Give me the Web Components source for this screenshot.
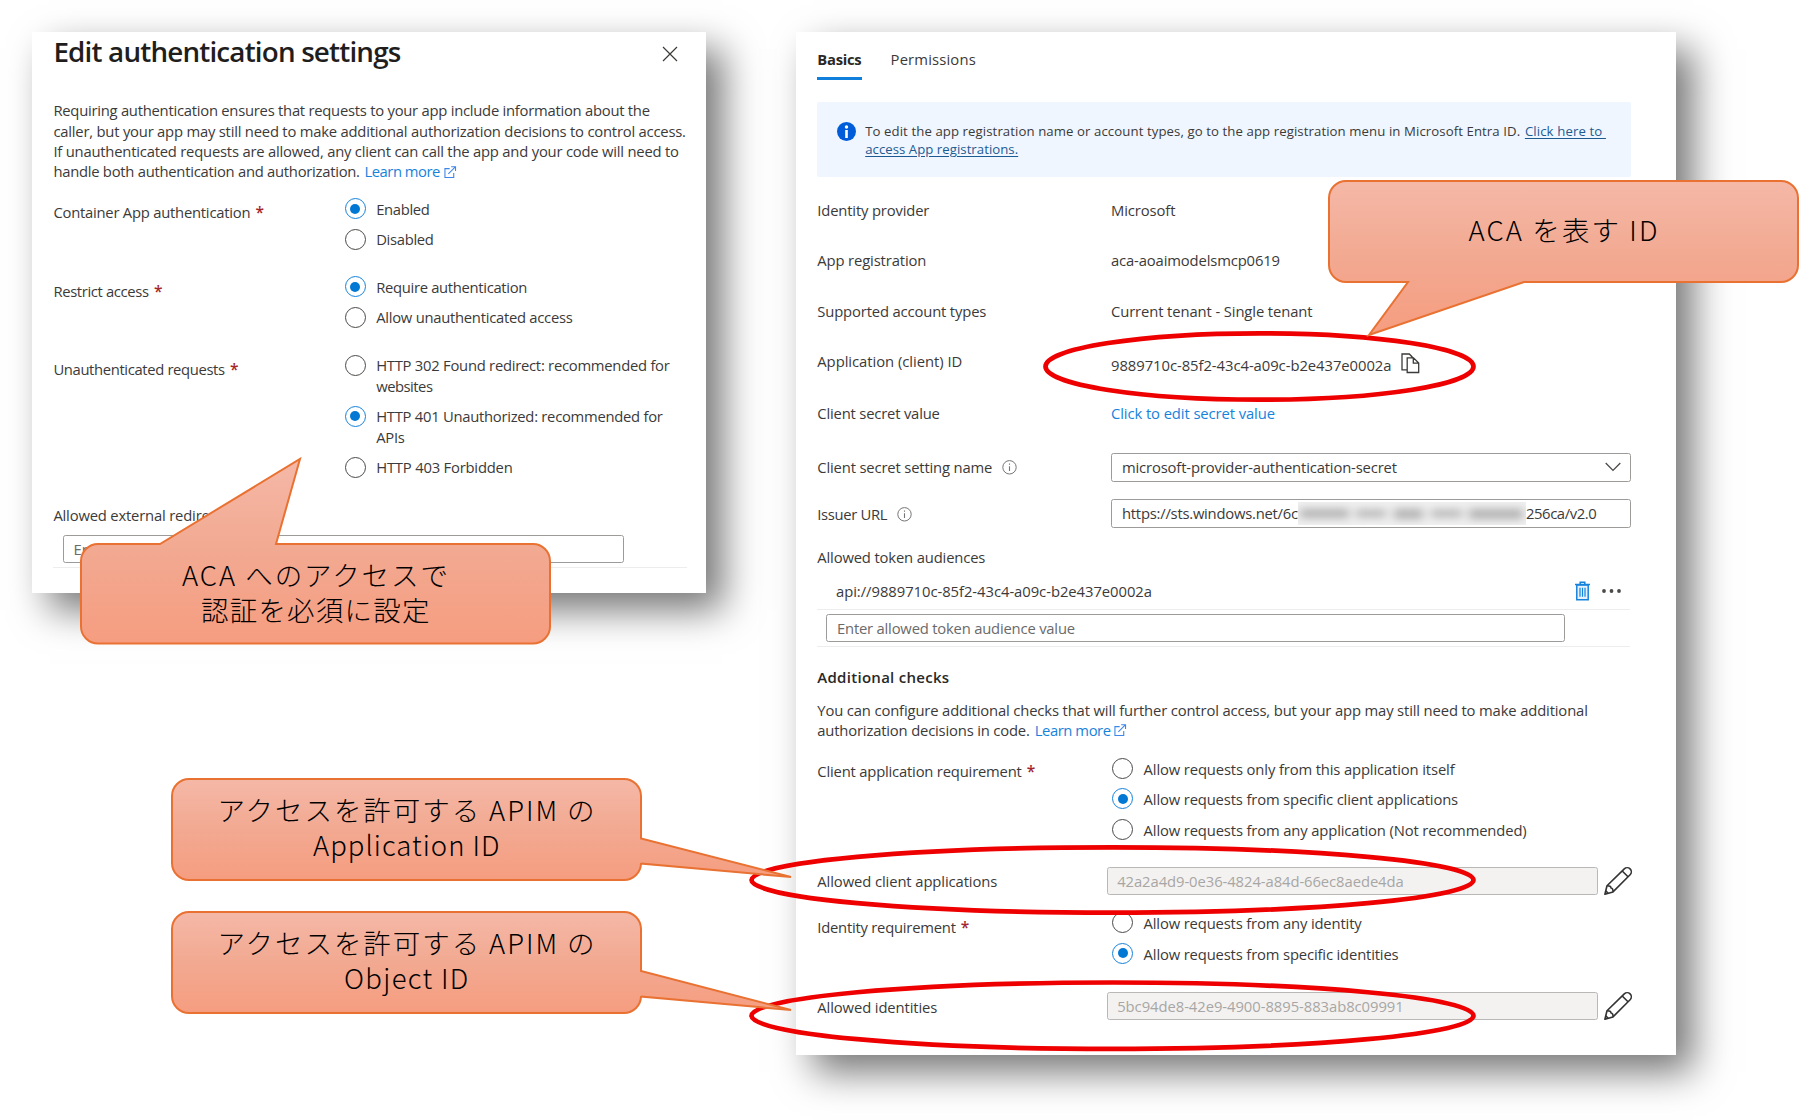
<!DOCTYPE html>
<html lang="ja">
<head>
<meta charset="utf-8">
<title>Authentication settings</title>
<style>
html,body{margin:0;padding:0}
body{width:1799px;height:1120px;overflow:hidden;background:#fff;position:relative;font-family:"Open Sans","Noto Sans",sans-serif;font-size:14.8px;line-height:20px;color:#3b3a39}
.stage{display:flex;align-items:flex-start;gap:90px;padding:32px 0 0 32px}
.link{color:#1583dc}
.para{display:flex;flex-direction:column;line-height:20.4px}
.para>div{display:flex;align-items:center;height:20.4px}
.ph{color:#6a6a6a}
</style>
</head>
<body>
<div class="stage">
  <az-panel style="--w:674px;--h:561px;--pl:21.4px;--tt:.4px">
    <panel-title style="height:68.3px"><fit-text w="347.5">Edit authentication settings</fit-text></panel-title>
    <div class="para" style="height:82.7px">
      <div><fit-text w="596.5">Requiring authentication ensures that requests to your app include information about the</fit-text></div>
      <div><fit-text w="632.5">caller, but your app may still need to make additional authorization decisions to control access.</fit-text></div>
      <div><fit-text w="625.5">If unauthenticated requests are allowed, any client can call the app and your code will need to</fit-text></div>
      <div><fit-text w="306.5">handle both authentication and authorization.</fit-text><fit-text class="link" w="75.5" style="margin-left:4.7px">Learn more</fit-text><az-icon name="ext" style="margin-left:4.3px"></az-icon></div>
    </div>
    <form-row style="--c:291.5px;--h:80px;--lt:19.2px;--vt:15.5px">
      <fit-text slot="label" w="197">Container App authentication</fit-text><req-mark slot="label"></req-mark>
      <radio-item checked><fit-text w="53.5">Enabled</fit-text></radio-item>
      <radio-item><fit-text w="57.5">Disabled</fit-text></radio-item>
    </form-row>
    <form-row style="--c:291.5px;--h:77px;--lt:17.8px;--vt:13.5px">
      <fit-text slot="label" w="95.5">Restrict access</fit-text><req-mark slot="label"></req-mark>
      <radio-item checked><fit-text w="151">Require authentication</fit-text></radio-item>
      <radio-item><fit-text w="196.5">Allow unauthenticated access</fit-text></radio-item>
    </form-row>
    <form-row style="--c:291.5px;--h:160px;--lt:18.8px;--vt:14.8px">
      <fit-text slot="label" w="171.5">Unauthenticated requests</fit-text><req-mark slot="label"></req-mark>
      <radio-item style="--rh:51px"><fit-text w="293.5">HTTP 302 Found redirect: recommended for</fit-text><fit-text w="56.5">websites</fit-text></radio-item>
      <radio-item checked style="--rh:51px"><fit-text w="286.5">HTTP 401 Unauthorized: recommended for</fit-text><fit-text w="28.5">APIs</fit-text></radio-item>
      <radio-item><fit-text w="136.5">HTTP 403 Forbidden</fit-text></radio-item>
    </form-row>
    <form-row style="--h:35px;--lt:4.8px;--c:400px"><fit-text slot="label" w="206">Allowed external redirect URLs</fit-text></form-row>
    <text-box class="ph" style="--w:560.5px;--bh:28px;--p:9.5px;margin-left:9.7px"><fit-text w="238">Enter allowed external redirect URL</fit-text></text-box>
    <hr-line style="width:634px;margin-top:4px"></hr-line>
  </az-panel>

  <az-panel style="--w:880px;--h:1023px;--pl:21.3px">
    <tab-bar>
      <tab-item active><fit-text w="44.3">Basics</fit-text></tab-item>
      <tab-item><fit-text w="85.2">Permissions</fit-text></tab-item>
    </tab-bar>
    <info-banner>
      <div><fit-text w="655">To edit the app registration name or account types, go to the app registration menu in Microsoft Entra ID.</fit-text><fit-text u w="81" style="margin-left:4.7px">Click here to&nbsp;</fit-text></div>
      <div><fit-text u w="153">access App registrations.</fit-text></div>
    </info-banner>
    <form-row style="--h:50.3px;--lt:22.8px;--vt:22.8px"><fit-text slot="label" w="112">Identity provider</fit-text><fit-text w="64.5">Microsoft</fit-text></form-row>
    <form-row style="--h:50.7px;--lt:22.9px;--vt:22.9px"><fit-text slot="label" w="109">App registration</fit-text><fit-text w="169">aca-aoaimodelsmcp0619</fit-text></form-row>
    <form-row style="--h:50.7px;--lt:23.1px;--vt:23.1px"><fit-text slot="label" w="169">Supported account types</fit-text><fit-text w="201.5">Current tenant - Single tenant</fit-text></form-row>
    <form-row line style="--h:51.3px;--lt:22.8px;--vt:24.6px"><fit-text slot="label" w="145">Application (client) ID</fit-text><fit-text w="280.5">9889710c-85f2-43c4-a09c-b2e437e0002a</fit-text><az-icon name="copy" style="margin-left:10px"></az-icon></form-row>
    <form-row style="--h:73px;--lt:23.3px;--vt:23.3px"><fit-text slot="label" w="122.5">Client secret value</fit-text><fit-text class="link" w="164">Click to edit secret value</fit-text></form-row>
    <form-row style="--h:46px;--lt:4.1px"><fit-text slot="label" w="175">Client secret setting name</fit-text><az-icon slot="label" name="info" style="margin-left:10px"></az-icon>
      <text-box style="--w:520px;--p:10px"><fit-text w="275">microsoft-provider-authentication-secret</fit-text><az-icon name="chev" style="margin-left:auto;margin-right:9px"></az-icon></text-box></form-row>
    <form-row style="--h:48.3px;--lt:5.3px"><fit-text slot="label" w="70">Issuer URL</fit-text><az-icon slot="label" name="info" style="margin-left:10px"></az-icon>
      <text-box style="--w:520px;--p:10px"><fit-text w="176">https://sts.windows.net/6c</fit-text><blur-patch></blur-patch><fit-text w="70.5">256ca/v2.0</fit-text></text-box></form-row>
    <form-row style="--h:33.7px"><fit-text slot="label" w="168">Allowed token audiences</fit-text></form-row>
    <audience-row><fit-text w="316">api://9889710c-85f2-43c4-a09c-b2e437e0002a</fit-text><az-icon name="trash" style="margin-left:auto"></az-icon><az-icon name="dots" style="margin:0 9.5px 0 12px"></az-icon></audience-row>
    <hr-line style="width:813px"></hr-line>
    <text-box class="ph" style="--w:739.5px;--p:10px;margin:4px 0 3.3px 8.7px"><fit-text w="238">Enter allowed token audience value</fit-text></text-box>
    <hr-line style="width:813px"></hr-line>
    <form-row style="--h:53.4px;--lt:20.8px;font-weight:600;color:#292827;font-size:15px"><fit-text slot="label" w="132">Additional checks</fit-text></form-row>
    <div class="para" style="height:41px">
      <div><fit-text w="770.5">You can configure additional checks that will further control access, but your app may still need to make additional</fit-text></div>
      <div><fit-text w="212.5">authorization decisions in code.</fit-text><fit-text class="link" w="76" style="margin-left:5px">Learn more</fit-text><az-icon name="ext" style="margin-left:3.5px"></az-icon></div>
    </div>
    <form-row style="--c:295px;--h:125.6px;--lt:20.2px;--vt:16.7px;--tt:.9px">
      <fit-text slot="label" w="204.5">Client application requirement</fit-text><req-mark slot="label"></req-mark>
      <radio-item style="--rh:30.5px"><fit-text w="311">Allow requests only from this application itself</fit-text></radio-item>
      <radio-item checked style="--rh:30.5px"><fit-text w="314.5">Allow requests from specific client applications</fit-text></radio-item>
      <radio-item><fit-text w="383">Allow requests from any application (Not recommended)</fit-text></radio-item>
    </form-row>
    <form-row line style="--c:289.4px;--h:28px;--lt:4.4px"><fit-text slot="label" w="180">Allowed client applications</fit-text>
      <text-box disabled style="--w:491px;--bh:28px;--p:9.5px"><fit-text w="286.5">42a2a4d9-0e36-4824-a84d-66ec8aede4da</fit-text></text-box><az-icon name="pencil" style="margin-left:6px"></az-icon></form-row>
    <form-row style="--c:295px;--h:97px;--lt:22.2px;--vt:17.9px;--tt:.7px">
      <fit-text slot="label" w="138.5">Identity requirement</fit-text><req-mark slot="label"></req-mark>
      <radio-item style="--rh:30.5px"><fit-text w="218">Allow requests from any identity</fit-text></radio-item>
      <radio-item checked><fit-text w="255">Allow requests from specific identities</fit-text></radio-item>
    </form-row>
    <form-row line style="--c:289.4px;--h:28px;--lt:5.3px"><fit-text slot="label" w="120">Allowed identities</fit-text>
      <text-box disabled style="--w:491px;--bh:28px;--p:9.5px"><fit-text w="286.5">5bc94de8-42e9-4900-8895-883ab8c09991</fit-text></text-box><az-icon name="pencil" style="margin-left:6px"></az-icon></form-row>
  </az-panel>
</div>

<red-ring cx="1259.5" cy="366.5" rx="214" ry="33.2"></red-ring>
<red-ring cx="1112.5" cy="880" rx="361" ry="32.7"></red-ring>
<red-ring cx="1112.5" cy="1015.7" rx="361" ry="33.2"></red-ring>
<note-callout box="81,544,550,643.5" side="top" base="160,276" tip="300,459" pad="13"><fit-text w="267">ACA へのアクセスで</fit-text><fit-text w="229">認証を必須に設定</fit-text></note-callout>
<note-callout box="1329,181,1798,282" side="bottom" base="1408,1524" tip="1369,335" pad="30.5"><fit-text w="190">ACA を表す ID</fit-text></note-callout>
<note-callout box="172,779,641,880" side="right" base="838.5,863.5" tip="791,877" pad="12.5"><fit-text w="378">アクセスを許可する APIM の</fit-text><fit-text w="187">Application ID</fit-text></note-callout>
<note-callout box="172,912,641,1013" side="right" base="971,996.5" tip="791,1010" pad="13"><fit-text w="378">アクセスを許可する APIM の</fit-text><fit-text w="125">Object ID</fit-text></note-callout>

<script>
const define=(name,html,init)=>customElements.define(name,class extends HTMLElement{
  connectedCallback(){
    if(this.shadowRoot)return;
    this.attachShadow({mode:'open'}).innerHTML=typeof html==='function'?html(this):html;
    if(init)init(this,this.shadowRoot);
  }
});

/* Panels and rows */
define('az-panel','<style>:host{display:flex;flex-direction:column;box-sizing:border-box;flex:none;width:var(--w);height:var(--h);padding-left:var(--pl);background:#fff;box-shadow:17px 17px 36px rgba(0,0,0,.54)}</style><slot></slot>');
define('panel-title','<style>:host{display:flex;justify-content:space-between;align-items:flex-start;box-sizing:border-box;padding:.5px 28px 0 0;font-size:27.8px;line-height:36px;font-weight:600;color:#1f1e1d}svg{margin-top:13.2px}</style><slot></slot><svg width="16" height="16" viewBox="0 0 16 16" stroke="#3b3a39" stroke-width="1.2"><path d="M1 1l14 14M15 1L1 15"/></svg>');
define('form-row','<style>:host{display:grid;grid-template-columns:var(--c,293.7px) 1fr;height:var(--h);flex:none}.l{display:flex;align-items:flex-start;padding-top:var(--lt,0)}.v{display:flex;flex-direction:column;padding-top:var(--vt,0)}:host([line]) .v{flex-direction:row;align-items:flex-start}:host([line]) ::slotted(fit-text){margin-top:2px}:host([line]) .l ::slotted(fit-text){margin-top:0}</style><div class="l"><slot name="label"></slot></div><div class="v"><slot></slot></div>');
define('req-mark','<style>:host{display:block;margin-left:5px;color:#a4262c;font-size:15.5px;line-height:20px;font-weight:600}</style>*');
define('hr-line','<style>:host{display:block;height:1px;flex:none;background:#eeeded}</style>');
define('radio-item','<style>:host{display:flex;gap:10.3px;height:var(--rh,30.3px);flex:none}i{box-sizing:border-box;width:21px;height:21px;flex:none;border:1.3px solid #4b4a48;border-radius:50%;display:flex;align-items:center;justify-content:center}:host([checked]) i{border-color:#1583dc}:host([checked]) i::after{content:"";width:10px;height:10px;border-radius:50%;background:#0078d4}div{display:flex;flex-direction:column;line-height:20.4px;padding-top:var(--tt,1.3px)}</style><i></i><div><slot></slot></div>');
define('text-box','<style>:host{display:flex;align-items:center;box-sizing:border-box;flex:none;width:var(--w);height:var(--bh,28.7px);padding-left:var(--p);border:1.3px solid #9d9b99;border-radius:2.5px;background:#fff}:host([disabled]){background:#f3f2f1;border-color:#bab8b7;color:#a8a6a4}</style><slot></slot>');
define('tab-bar','<style>:host{display:flex;gap:29px;height:69.7px;flex:none}</style><slot></slot>');
define('tab-item','<style>:host{display:block;box-sizing:border-box;height:47.7px;padding-top:16.7px;border-bottom:3px solid transparent}:host([active]){border-color:#0f7fdb;font-weight:700;color:#292827}</style><slot></slot>');
define('info-banner','<style>:host{display:flex;gap:9.5px;box-sizing:border-box;flex:none;width:813.4px;height:75.3px;padding:20.3px 0 0 19.4px;background:#f0f6ff;border-radius:2px;font-size:13.2px;line-height:17.7px}.t{padding-top:1.5px}::slotted(div){display:flex}</style><svg width="19" height="19" viewBox="0 0 19 19"><circle cx="9.5" cy="9.5" r="9.5" fill="#015cda"/><circle cx="9.5" cy="5" r="1.7" fill="#fff"/><path d="M9.5 8v8" stroke="#fff" stroke-width="2.6"/></svg><div class="t"><slot></slot></div>');
define('audience-row','<style>:host{display:flex;align-items:center;box-sizing:border-box;width:813.4px;height:27.7px;flex:none;padding:0 0 8.3px 18.7px}</style><slot></slot>');
define('blur-patch','<style>:host{display:flex;align-items:center;width:228px;height:23px;overflow:hidden;background:#f0f0f0}svg{flex:none}</style><svg width="228" height="23"><filter id="b" x="-20%" y="-100%" width="140%" height="300%"><feGaussianBlur stdDeviation="5 4.2"/></filter><g filter="url(#b)" fill="#b0b0b0"><rect x="2" y="7" width="49" height="9"/><rect x="58" y="8" width="30" height="7"/><rect x="96" y="7" width="29" height="10"/><rect x="133" y="8" width="31" height="7"/><rect x="171" y="7" width="54" height="10"/></g></svg>');

/* Icons */
const ICONS={
  ext:[12.3,12.3,'<path d="M6 2.8H1v9.3h9.3V7.3M4.6 8.4L12 1M7.6 .8h4.6v4.6" fill="none" stroke="#3d87e8" stroke-width="1.15"/>','0 0 13 13'],
  copy:[19,21,'<path d="M6 16.8H1V1h7.3l3 3M8.3 1l3.6 3.8M6.2 4.8h6.3l5.2 5.2v9.5H6.2zM12.3 4.8v5.4h5.4" fill="none" stroke="#3b3a39" stroke-width="1.3"/>'],
  info:[15,20,'<circle cx="7.5" cy="10.3" r="6.7" fill="none" stroke="#777573" stroke-width="1"/><path d="M7.5 9.3v4.6M7.5 6.5v1.3" stroke="#777573" stroke-width="1.1"/>'],
  chev:[16,10,'<path d="M.7 1l7.3 7.4L15.3 1" fill="none" stroke="#4b4a48" stroke-width="1.3"/>'],
  trash:[15,20,'<path d="M1.8 4h11.4v14.7H1.8z" fill="#e6f2fc" stroke="#1583dc" stroke-width="1.5"/><path d="M0 3.6h15M5.2 3V1.2h4.6V3" fill="none" stroke="#1583dc" stroke-width="1.5"/><path d="M5 6.8v9M7.5 6.8v9M10 6.8v9" stroke="#1583dc" stroke-width="1.2"/>'],
  dots:[19,6,'<g fill="#4b4a48"><circle cx="2" cy="3" r="1.9"/><circle cx="9.5" cy="3" r="1.9"/><circle cx="17" cy="3" r="1.9"/></g>'],
  pencil:[28,28,'<g fill="none" stroke="#333" stroke-width="1.6" stroke-linejoin="round"><path d="M.9 27.2L3 18.8 20.3 1.9a4.1 4.1 0 0 1 5.8 5.8L9 24.9z"/><path d="M18.2 4l5.8 5.8M3 18.8c2.6-.1 4 .6 4 2.2 1.4.1 2.2 1.5 2 3.9M1.8 23.9l2.4 2.4"/></g>']
};
define('az-icon',el=>{const [w,h,p,vb]=ICONS[el.getAttribute('name')];return `<style>:host{display:block;flex:none}svg{display:block;overflow:visible}</style><svg width="${w}" height="${h}" viewBox="${vb||`0 0 ${w} ${h}`}">${p}</svg>`});

/* Annotations drawn over the panels */
define('red-ring',el=>{
  const [cx,cy,rx,ry]=['cx','cy','rx','ry'].map(a=>+el.getAttribute(a));
  return `<style>:host{position:absolute;left:0;top:0;pointer-events:none}svg{display:block}</style><svg width="1799" height="1120"><ellipse cx="${cx}" cy="${cy}" rx="${rx}" ry="${ry}" fill="none" stroke="#ee0000" stroke-width="4.7"/></svg>`;
});
define('note-callout',el=>{
  const n=a=>el.getAttribute(a).split(',').map(Number);
  const [l,t,r,b]=n('box'),[p,q]=n('base'),[x,y]=n('tip'),side=el.getAttribute('side'),R=17;
  const top=side==='top'?`L${p} ${t}L${x} ${y}L${q} ${t}`:'';
  const right=side==='right'?`L${r} ${p}L${x} ${y}L${r} ${q}`:'';
  const bottom=side==='bottom'?`L${q} ${b}L${x} ${y}L${p} ${b}`:'';
  const d=`M${l+R} ${t}${top}L${r-R} ${t}A${R} ${R} 0 0 1 ${r} ${t+R}${right}L${r} ${b-R}A${R} ${R} 0 0 1 ${r-R} ${b}${bottom}L${l+R} ${b}A${R} ${R} 0 0 1 ${l} ${b-R}L${l} ${t+R}A${R} ${R} 0 0 1 ${l+R} ${t}Z`;
  return `<style>:host{position:absolute;left:${l}px;top:${t}px;width:${r-l}px;height:${b-t}px;box-sizing:border-box;padding-top:${el.getAttribute('pad')}px;display:flex;flex-direction:column;align-items:center;font:300 27.5px/35px "Noto Sans CJK JP",sans-serif;color:#000}svg{position:absolute;left:${-l}px;top:${-t}px}::slotted(fit-text){position:relative}</style><svg width="1799" height="1120"><defs><linearGradient id="g" x1="0" y1="0" x2="0" y2="1"><stop offset="0" stop-color="#f5b8a7"/><stop offset=".5" stop-color="#f2a991"/><stop offset="1" stop-color="#f69d80"/></linearGradient></defs><path d="${d}" fill="url(#g)" stroke="#e97132" stroke-width="2"/></svg><slot></slot>`;
});

/* Single line of text whose tracking is set so that it fills the width w.
   Registered last: it measures with the fonts its ancestors' shadow styles give it. */
define('fit-text','<style>:host{display:block;flex:none;white-space:nowrap}span{display:inline-block;white-space:nowrap}:host([u]) span{color:#1c5b92;text-decoration:underline;text-underline-offset:2px}</style><span><slot></slot></span>',(el,root)=>{
  const w=+el.getAttribute('w'),s=root.querySelector('span');
  el.style.width=w+'px';
  s.style.letterSpacing=(w-s.getBoundingClientRect().width)/(el.textContent.length-.5)+'px';
});
</script>
</body>
</html>
